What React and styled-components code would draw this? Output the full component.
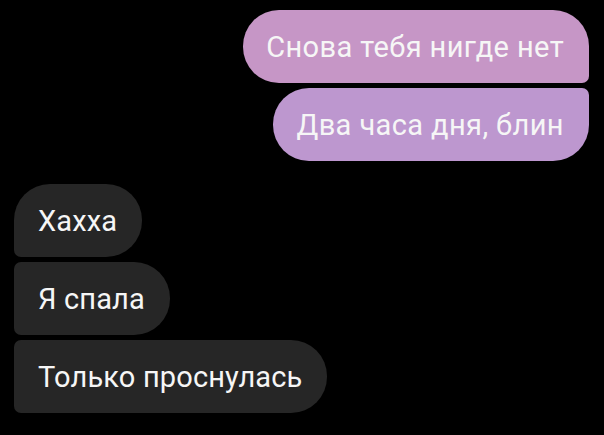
import React from "react";
import styled, { createGlobalStyle } from "styled-components";

const GlobalStyle = createGlobalStyle`
  html, body {
    margin: 0;
    padding: 0;
    background: #000;
  }
  body {
    font-family: Roboto, "Noto Sans", sans-serif;
    -webkit-font-smoothing: antialiased;
  }
`;

const messages = [
  { id: 1, side: "out", text: "Снова тебя нигде нет", corners: "36px 36px 7px 36px", tone: "#c696c6" },
  { id: 2, side: "out", text: "Два часа дня, блин", corners: "36px 7px 36px 36px", tone: "#bd97cf" },
  { id: 3, side: "in", text: "Хахха", corners: "36px 36px 36px 7px" },
  { id: 4, side: "in", text: "Я спала", corners: "7px 36px 36px 7px" },
  { id: 5, side: "in", text: "Только проснулась", corners: "7px 36px 36px 7px" },
];

function App() {
  const outgoing = messages.filter((m) => m.side === "out");
  const incoming = messages.filter((m) => m.side === "in");

  return (
    <>
      <GlobalStyle />
      <StyledChat>
        <Group $side="out">
          {outgoing.map((m) => (
            <Bubble key={m.id} $side="out" $corners={m.corners} $tone={m.tone}>
              {m.text}
            </Bubble>
          ))}
        </Group>
        <Group $side="in">
          {incoming.map((m) => (
            <Bubble key={m.id} $side="in" $corners={m.corners}>
              {m.text}
            </Bubble>
          ))}
        </Group>
      </StyledChat>
    </>
  );
}

const StyledChat = styled.div`
  width: 604px;
  height: 435px;
  box-sizing: border-box;
  padding: 10px 15px 0 14px;
  display: flex;
  flex-direction: column;
  gap: 23px;
  background: #000;
  overflow: hidden;
`;

const Group = styled.div`
  display: flex;
  flex-direction: column;
  align-items: ${(p) => (p.$side === "out" ? "flex-end" : "flex-start")};
  gap: 5px;
`;

const Bubble = styled.div`
  height: 73px;
  box-sizing: border-box;
  padding: ${(p) => (p.$side === "out" ? "0 25px 0 23px" : "0 25px 0 24px")};
  display: flex;
  align-items: center;
  border-radius: ${(p) => p.$corners};
  background: ${(p) => (p.$side === "out" ? p.$tone : "#262626")};
  color: #f6f6f6;
  font-size: 29px;
  font-weight: 400;
  letter-spacing: ${(p) => (p.$side === "out" ? "0.4px" : "0.15px")};
  white-space: nowrap;
`;

export default App;
